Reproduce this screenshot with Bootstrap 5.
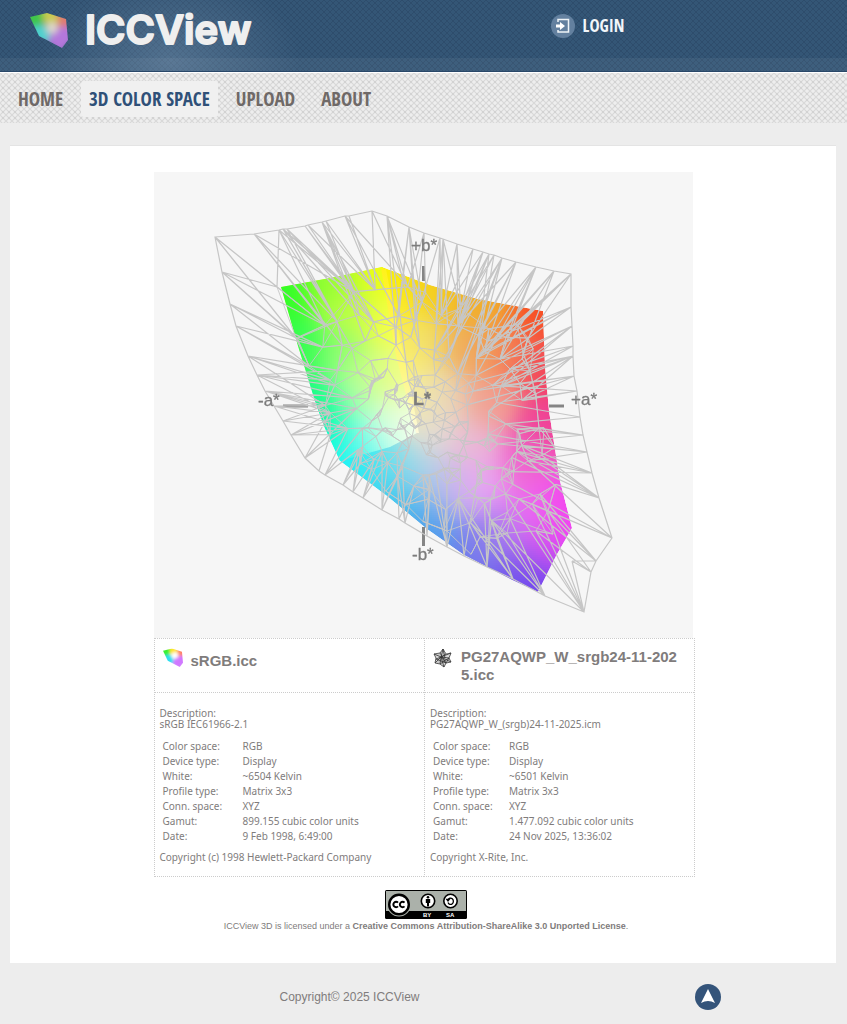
<!DOCTYPE html>
<html lang="en">
<head>
<meta charset="utf-8">
<meta name="viewport" content="width=device-width, initial-scale=1">
<title>ICCView - 3D Color Space</title>
<link href="https://cdn.jsdelivr.net/npm/bootstrap@5.3.0/dist/css/bootstrap.min.css" rel="stylesheet">
<style>
body{background:#ededed;color:#807c7c;font-family:"Liberation Sans",Arial,sans-serif;font-size:12px}
a{color:inherit;text-decoration:none}
.site-top{height:72px;background:
 linear-gradient(transparent 58px,rgba(255,255,255,.05) 58px),
 radial-gradient(ellipse 130px 90px at 170px 60px,rgba(160,185,210,.28),transparent),
 linear-gradient(45deg,transparent 42%,rgba(20,35,60,.17) 50%,transparent 58%) 0 0/6px 6px,
 linear-gradient(-45deg,transparent 42%,rgba(20,35,60,.17) 50%,transparent 58%) 0 0/6px 6px,#345676;border-bottom:1px solid #2a4869}
.brand-col{width:65%;padding-left:30px}
.narrow{font-family:"Open Sans Condensed","Liberation Sans Narrow","Liberation Sans",sans-serif;font-weight:700;text-transform:uppercase}
.login-link{color:#f2f6fa;font-size:17px;line-height:24px;padding-top:14px}
.site-nav{height:51px;border-top:1px solid #fff;background:
 linear-gradient(45deg,transparent 38%,rgba(0,0,0,.09) 50%,transparent 62%) 0 0/6px 6px,
 linear-gradient(-45deg,transparent 38%,rgba(0,0,0,.09) 50%,transparent 62%) 0 0/6px 6px,#eee}
.site-nav .nav{padding-left:10px;padding-top:2px;gap:10px}
.site-nav .nav-link{color:#6f6967;font-size:19px;line-height:36px;padding:0 8px;border-radius:3px}
.site-nav .nav-link.active{color:#2f5078;background:#f0f0f0}
.panel{margin:22px 11px 0 10px;background:#fff;padding:26px 0 30px 2px;border-top:1px solid #e4e4e4}
.viewer{max-width:541px}
.stage{background:#f6f6f6;margin-right:2px;padding-top:1px}
.stage canvas,.stage svg{display:block;width:100%}
.stage svg{position:absolute;left:0;bottom:0}
.profile{border:1px dotted #ccc;border-width:1px 0 1px 1px}
.profile:last-child{border-right-width:1px}
.profile header{height:54px;border-bottom:1px dotted #ccc;padding:9px 8px 0}
.profile h2{font-size:15px;line-height:18px;font-weight:700;margin:0;word-break:break-all}
.details{font:10px/11px "Noto Sans",Verdana,sans-serif;padding:15px 5px 13px 5px}
.details p{margin:0 0 9px}
.details table{margin:0 0 8px 3px;line-height:15px}
.details th{font-weight:400;padding:0;width:80px}
.details td{padding:0}
.profile:last-child th{width:76px}
.license{font-size:9px;line-height:14px;padding:13px 0 0 4px}
.site-foot{padding:21px 0 13px 0}
.foot-text{width:33%}
.foot-up{padding-right:126px}
</style>
</head>
<body>
<div class="site-top d-flex align-items-start">
  <div class="brand-col">
    <a href="#" class="d-flex align-items-center gap-3 pt-2" aria-label="ICCView">
      <svg width="40" height="44" viewBox="0 0 40 44" aria-hidden="true">
        <defs>
          <clipPath id="gem"><path d="M0 8 17 4 36 10 38 31 32 39 9 27Z"/></clipPath>
          <filter id="soft" x="-50%" y="-50%" width="200%" height="200%"><feGaussianBlur stdDeviation="3"/></filter>
          <g id="gemfill" clip-path="url(#gem)"><g filter="url(#soft)">
            <path d="M-9 0H14L12 20 0 22Z" fill="#3fc64b"/><path d="M12-5H28V16H14Z" fill="#c9cc50"/>
            <path d="M27 0H45V19H28Z" fill="#df7b70"/><path d="M-2 20 14 15 24 32 8 36Z" fill="#4fd0ce"/>
            <path d="M24 18H45V30L30 45 17 34Z" fill="#b477dc"/><circle cx="22" cy="19" r="6" fill="#ded5cc"/>
          </g></g>
        </defs>
        <use href="#gemfill" y="1"/>
      </svg>
      <svg width="170" height="44" viewBox="0 0 170 44"><text x="-1" y="36" font-family="Inter, sans-serif" font-weight="600" font-size="40" fill="#efefef" stroke="#efefef" stroke-width="2" stroke-linejoin="round">ICCView</text></svg>
    </a>
  </div>
  <a href="#" class="login-link narrow d-flex align-items-center gap-2">
    <svg width="24" height="24" viewBox="0 0 24 24" aria-hidden="true"><circle cx="12" cy="12" r="12" fill="#63809f"/><path d="M7 8V5.500h10.500v12.500H7V16" fill="none" stroke="#eef3f7" stroke-width="1.500"/><path d="M5 10.500h4V8l5 4-5 4v-2.500H5Z" fill="#fff"/></svg>
    Login
  </a>
</div>
<nav class="site-nav d-flex align-items-center">
  <div class="nav narrow">
    <a class="nav-link" href="#">Home</a>
    <a class="nav-link active" href="#">3D Color Space</a>
    <a class="nav-link" href="#">Upload</a>
    <a class="nav-link" href="#">About</a>
  </div>
</nav>
<main class="panel">
  <div class="viewer mx-auto">
    <div class="stage position-relative">
      <canvas id="solid" width="539" height="465"></canvas>
      <svg viewBox="154 172 539 465" role="img" aria-label="Gamut comparison">
        <g stroke="#858585" stroke-width="3"><path d="M423.500 265V280M423.500 526V545M283 405h25M549 405h15"/></g>
        <g fill="none" stroke="#c6c6c6"><path id="mesh" stroke-width=".9"/><path id="fans" stroke-width="1.200"/></g>
        <g fill="#7c7c7c" font-size="17" font-family="Liberation Sans" stroke="#7c7c7c" stroke-width=".3">
          <text x="411" y="250">+b*</text><text x="412" y="559">-b*</text><text x="258" y="405">-a*</text><text x="571" y="404">+a*</text>
          <text x="413" y="404" font-size="18" font-weight="700">L*</text>
        </g>
      </svg>
    </div>
    <div class="row g-0">
      <section class="col-6 profile">
        <header class="d-flex gap-2">
          <svg class="flex-shrink-0" width="20" height="20" viewBox="0 4 38 36" aria-hidden="true">
            <g clip-path="url(#gem)"><g filter="url(#soft)">
            <path d="M-9 0H14L12 20 0 22Z" fill="#3bef32"/><path d="M12-5H28V16H14Z" fill="#ffe52c"/>
            <path d="M27 0H45V19H28Z" fill="#ff8368"/><path d="M-2 20 14 15 24 32 8 36Z" fill="#2ddff0"/>
            <path d="M24 18H45V30L30 45 17 34Z" fill="#d078ff"/><circle cx="23" cy="17" r="6" fill="#fff"/></g></g>
          </svg>
          <h2 class="pt-1">sRGB.icc</h2>
        </header>
        <div class="details">
          <p>Description:<br>sRGB IEC61966-2.1</p>
          <table>
            <tr><th scope="row">Color space:</th><td>RGB</td></tr>
            <tr><th scope="row">Device type:</th><td>Display</td></tr>
            <tr><th scope="row">White:</th><td>~6504 Kelvin</td></tr>
            <tr><th scope="row">Profile type:</th><td>Matrix 3x3</td></tr>
            <tr><th scope="row">Conn. space:</th><td>XYZ</td></tr>
            <tr><th scope="row">Gamut:</th><td>899.155 cubic color units</td></tr>
            <tr><th scope="row">Date:</th><td>9 Feb 1998, 6:49:00</td></tr>
          </table>
          <p class="mb-0">Copyright (c) 1998 Hewlett-Packard Company</p>
        </div>
      </section>
      <section class="col-6 profile">
        <header class="d-flex gap-2">
          <svg class="flex-shrink-0" width="20" height="20" viewBox="0 0 20 20" aria-hidden="true">
            <g fill="#b5b5b5" fill-opacity=".5" stroke="#333" stroke-width=".8" stroke-linejoin="round"><path d="m10 1 3 5 5-1-2 5 2 4-5 1-2 4-4-3-5-1 1-5-2-4 6-1Z"/><path d="m10 1-2 8 5-3M1 6l7 3 10-4M3 11l5-2 8 1M2 15l6-6 10 5M7 16l1-7 5 6M11 19 8 9M3 11l10 4 3-5-9 6M7 5l6 10M10 1l2 9"/></g>
          </svg>
          <h2>PG27AQWP_W_srgb24-11-2025.icc</h2>
        </header>
        <div class="details">
          <p>Description:<br>PG27AQWP_W_(srgb)24-11-2025.icm</p>
          <table>
            <tr><th scope="row">Color space:</th><td>RGB</td></tr>
            <tr><th scope="row">Device type:</th><td>Display</td></tr>
            <tr><th scope="row">White:</th><td>~6501 Kelvin</td></tr>
            <tr><th scope="row">Profile type:</th><td>Matrix 3x3</td></tr>
            <tr><th scope="row">Conn. space:</th><td>XYZ</td></tr>
            <tr><th scope="row">Gamut:</th><td>1.477.092 cubic color units</td></tr>
            <tr><th scope="row">Date:</th><td>24 Nov 2025, 13:36:02</td></tr>
          </table>
          <p class="mb-0">Copyright X-Rite, Inc.</p>
        </div>
      </section>
    </div>
  </div>
  <div class="license text-center">
    <a href="#" class="d-block" aria-label="Creative Commons">
      <svg class="d-block mx-auto" width="82" height="29" viewBox="0 0 82 29">
        <rect width="82" height="29" rx="1.500" fill="#000"/><rect x="1" y="1" width="80" height="20" fill="#abb1aa"/>
        <circle cx="14" cy="14.500" r="12" fill="#abb1aa"/><circle cx="14" cy="14.500" r="9.800" fill="#fff" stroke="#000" stroke-width="2.400"/>
        <path d="M13 12.600a2.700 2.700 0 1 0 0 3.800M19.500 12.600a2.700 2.700 0 1 0 0 3.800" fill="none" stroke="#000" stroke-width="2"/>
        <g fill="#fff" stroke="#000" stroke-width="1.600"><circle cx="43" cy="11" r="6.700"/><circle cx="65.500" cy="11" r="6.700"/></g>
        <circle cx="43" cy="7.200" r="1.300"/><path d="M40.800 9h4.400v4h-1.200v3.500h-2V13h-1.200Z"/>
        <path d="M63 10a2.800 3.200 0 1 1 0 2.500M61.800 9.500h2.400l-1.200 1.500Z" fill="none" stroke="#000" stroke-width="1.300"/>
        <g fill="#fff" font-family="Liberation Sans" font-size="6" font-weight="700"><text x="38" y="27">BY</text><text x="61" y="27">SA</text></g>
      </svg>
    </a>
    ICCView 3D is licensed under a <a href="#" class="fw-bold">Creative Commons Attribution-ShareAlike 3.0 Unported License</a>.
  </div>
</main>
<footer class="site-foot d-flex align-items-center">
  <div class="foot-text"></div>
  <span>Copyright© 2025 ICCView</span>
  <div class="flex-grow-1 text-end foot-up">
    <a href="#" aria-label="Back to top" class="d-inline-block"><svg width="26" height="26" viewBox="0 0 26 26"><circle cx="13" cy="13" r="13" fill="#34547a"/><path d="m13 5 7 14q-7-4-14 0Z" fill="#fff"/></svg></a>
  </div>
</footer>
<script src="https://cdn.jsdelivr.net/npm/bootstrap@5.3.0/dist/js/bootstrap.bundle.min.js"></script>
<script>
// Both shapes share the view box that starts at (154, 172).
const OX = 154, OY = 172;
const body = [[281,286],[330,277],[382,266],[430,284],[478,298],[543,310],[545,365],[549,410],[560,480],[572,527],[556,555],[538,591],[512,579],[487,566],[464,554],[427,528],[387,495],[340,460],[324,425],[315,400],[298,345]];
const ridge = [[270,260],[382,260],[386,290],[400,355],[417,432],[390,446],[340,460],[270,460]];
const faceA = [[283,290,50,255,40],[330,280,150,255,50],[380,270,240,255,20],[350,310,190,255,70],[300,345,50,255,80],[385,320,250,255,70],[340,350,140,255,115],[370,370,210,255,130],[398,375,250,252,130],[316,402,15,255,130],[355,395,170,255,175],[395,410,228,255,200],[414,428,255,255,245],[326,430,5,255,195],[342,457,0,250,245],[365,435,150,255,225],[390,435,225,255,238],[365,458,90,245,245]];
const faceB = [[384,270,252,242,0],[391,310,252,242,40],[400,350,255,250,110],[410,395,250,245,160],[430,288,245,205,30],[478,302,242,175,40],[541,313,248,78,35],[420,340,238,215,110],[470,345,240,172,95],[510,350,245,130,85],[544,365,243,65,90],[440,395,232,212,180],[490,400,242,160,145],[546,420,240,65,150],[430,430,228,222,215],[470,445,235,185,215],[525,460,240,100,205],[562,500,242,75,235],[570,527,245,60,245],[480,485,236,165,245],[530,510,240,110,242],[450,490,200,180,238],[425,475,185,210,230],[395,465,140,225,235],[360,462,80,240,242],[342,460,0,250,245],[375,485,40,210,242],[405,505,60,185,240],[430,525,80,155,236],[480,545,110,125,235],[500,530,185,130,240],[540,550,205,85,240],[512,575,110,90,235],[538,588,105,65,240]];
const path = pts => { const p = new Path2D(); pts.forEach((v,i)=>p[i?'lineTo':'moveTo'](v[0]-OX,v[1]-OY)); p.closePath(); return p; };
const ctx = document.getElementById('solid').getContext('2d');
function shade(face, outline, sigma) {
  ctx.save(); ctx.clip(path(body)); ctx.clip(path(outline));
  for (let y=260;y<596;y+=2) for (let x=278;x<576;x+=2) {
    let w=1e-30,r=0,g=0,b=0;
    for (const c of face) { const k=Math.exp(-((x-c[0])**2+(y-c[1])**2)/(2*sigma*sigma)); w+=k;r+=k*c[2];g+=k*c[3];b+=k*c[4]; }
    ctx.fillStyle=`rgb(${r/w|0},${g/w|0},${b/w|0})`; ctx.fillRect(x-OX,y-OY,2,2);
  }
  ctx.restore();
}
shade(faceB, body, 20); shade(faceA, ridge, 19);
// Bright edge where the two faces meet.
const edge = ctx.createLinearGradient(0, 268-OY, 0, 432-OY);
edge.addColorStop(0, '#fff21a'); edge.addColorStop(.6, '#fdf77c'); edge.addColorStop(1, '#fdf9dc');
ctx.fillStyle = edge;
ctx.fill(path([[381,267],[386,268],[393,305],[405,360],[419,432],[416,432],[396,355]]));

// Rim of the wire solid: x, y, then the direction its fan points to, its length and number of wires.
const rim = [[215,236,.78,.6,105,5],[254,233,.72,.7,110,5],[279,229,.6,.8,90,6],[283,228,.62,.8,120,5],[287,228,.6,.8,100,4],[305,225,.55,.83,95,5],[308,224,.6,.8,70,4],[322,221,.5,.86,90,5],[326,220,.55,.83,70,4],[345,215,.45,.89,90,6],[349,215,.4,.9,70,3],[372,210,.2,.97,75,3],[387,215,.2,.97,110,3],[409,226,.05,1,90,3],[424,232,-.1,1,65,3],[440,237,-.1,1,85,3],[443,238,.05,1,100,3],[457,243,0,1,80,3],[473,248,-.2,.97,80,3],[483,251,-.35,.93,90,3],[489,253,-.38,.92,100,3],[494,254,-.4,.9,100,3],[502,257,-.45,.9,110,4],[516,261,-.5,.86,100,5],[536,266,-.55,.82,105,4],[554,270,-.6,.8,100,3],[571,273,-.68,.73,100,5],[571,306,-.85,.52,80,4],[572,325,-.85,.5,90,5],[573,345,-.9,.42,85,3],[573,355,-.92,.38,90,4],[574,375,-.97,.22,80,3],[577,390,-.98,.12,85,3],[580,416,-1,-.05,80,3],[583,434,-1,-.1,70,2],[587,451,-1,-.1,80,3],[592,472,-.95,-.25,75,2],[599,497,-.86,-.5,75,3],[612,537,-.88,-.45,95,6],[596,560,-.65,-.75,80,3],[591,571,-.7,-.7,60,2],[584,611,-.55,-.83,105,7],[545,595,-.5,-.85,90,4],[513,578,-.4,-.9,75,5],[487,566,-.15,-1,65,4],[464,555,-.1,-1,60,5],[447,546,-.1,-1,60,4],[427,535,0,-1,55,4],[405,522,0,-1,50,4],[399,518,.2,-.95,45,3],[382,509,.2,-.95,50,5],[363,497,.35,-.93,40,5],[353,491,.35,-.93,42,3],[343,484,.4,-.9,40,4],[325,474,.6,-.8,45,5],[319,470,.5,-.8,30,3],[305,457,.75,-.65,50,6],[291,434,.92,-.3,55,4],[283,420,.95,-.1,60,3],[274,405,.97,.05,60,4],[265,390,.97,.2,70,5],[257,374,.96,.2,75,5],[248,355,.95,.28,75,6],[236,325,.88,.4,80,6],[230,303,.85,.5,85,6],[222,271,.78,.6,90,5]];
let seed = 7;
const rnd = () => (seed = (seed*16807)%2147483647)/2147483647;
const inside = (p, poly) => { let c=false; for(let i=0,j=poly.length-1;i<poly.length;j=i++){const a=poly[i],b=poly[j]; if((a[1]>p[1])!==(b[1]>p[1])&&p[0]<(b[0]-a[0])*(p[1]-a[1])/(b[1]-a[1])+a[0])c=!c;} return c; };
// Inner vertices: rings that get denser toward the neutral axis.
const inner = [];
[[8,8],[18,12],[29,17],[42,22],[56,25],[72,28],[90,30],[110,31],[134,30]].forEach(([r,n]) => {
  for (let i=0;i<n;i++) { const a=(i+rnd()*.7)/n*Math.PI*2, q=r*(.9+rnd()*.2); const p=[428+q*Math.cos(a)+r*.12*Math.sin(a),415+q*Math.sin(a)*1.02]; if(inside(p,body)) inner.push(p); }
});
for(let i=0;i<45;i++) inner.push([368+rnd()*58,375+rnd()*62]);
for(let i=0;i<38;i++) inner.push([420+rnd()*100,430+rnd()*70]);
[[548,510],[540,493],[519,498],[536,530],[553,533],[507,532],[480,536],[447,530],[528,337],[523,352],[488,340],[500,358],[530,370],[536,398],[539,427],[277,286],[296,337],[309,365],[318,405]].forEach(p=>inner.push(p));
const dist = (a,b) => Math.hypot(a[0]-b[0],a[1]-b[1]);
const seg = (a,b) => `M${a[0].toFixed(1)} ${a[1].toFixed(1)}L${b[0].toFixed(1)} ${b[1].toFixed(1)}`;
let mesh = '', fans = 'M'+rim.map(p=>p[0]+' '+p[1]).join('L')+'Z';
inner.forEach((p,i) => inner.map((q,j)=>[dist(p,q),j]).sort((a,b)=>a[0]-b[0]).slice(1,6).forEach(([,j])=>{ if(j>i||rnd()<.4) mesh += seg(p,inner[j]); }));
rim.forEach((p,n) => { const count=p[5]+(n<38||n>56?2:0); for(let k=0;k<count;k++) {
  const len=p[4]*(.7+.6*rnd()), t=(k/(count-1)-.5)*.34, c=Math.cos(t), s=Math.sin(t);
  const aim=[p[0]+(p[2]*c-p[3]*s)*len, p[1]+(p[3]*c+p[2]*s)*len];
  fans += seg(p, inner.reduce((m,q)=>dist(q,aim)<dist(m,aim)?q:m));
}});
[[612,537],[596,560],[572,560],[591,571],[584,611],[572,560]].reduce((a,b)=>(fans+=seg(a,b),b));
document.getElementById('mesh').setAttribute('d', mesh);
document.getElementById('fans').setAttribute('d', fans);
</script>
</body>
</html>
